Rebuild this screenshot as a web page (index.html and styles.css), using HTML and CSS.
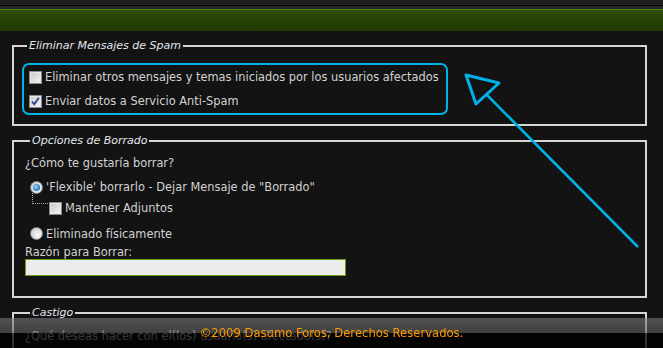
FILE: index.html
```
<!DOCTYPE html>
<html lang="es">
<head>
  <meta charset="UTF-8" />
  <title>Moderación - Eliminar Mensajes</title>
  <link rel="stylesheet" href="styles.css">
</head>
<body>
  <!-- Cabecera -->
  <div class="cabecera">
    <div class="franja-superior"></div>
    <div class="franja-gris"></div>
    <div class="barra-verde"></div>
  </div>

  <div class="contenido">
    <fieldset class="grupo grupo-spam">
      <legend>Eliminar Mensajes de Spam</legend>
      <div class="resaltado">
        <label class="fila">
          <span class="casilla"></span>
          Eliminar otros mensajes y temas iniciados por los usuarios afectados
        </label>
        <label class="fila">
          <span class="casilla marcada">
            <svg width="11" height="11" viewBox="0 0 11 11"><path d="M2 5.5 L4.3 8.3 L8.8 1.8" fill="none" stroke="#2a3f9c" stroke-width="1.8"/></svg>
          </span>
          Enviar datos a Servicio Anti-Spam
        </label>
      </div>
    </fieldset>

    <fieldset class="grupo grupo-borrado">
      <legend>Opciones de Borrado</legend>
      <p class="pregunta">¿Cómo te gustaría borrar?</p>
      <label class="opcion">
        <span class="radio activo"></span>
        'Flexible' borrarlo - Dejar Mensaje de "Borrado"
      </label>
      <label class="opcion sub">
        <span class="guia"></span>
        <span class="casilla"></span>
        Mantener Adjuntos
      </label>
      <label class="opcion segunda">
        <span class="radio"></span>
        Eliminado físicamente
      </label>
      <div class="etiqueta">Razón para Borrar:</div>
      <input class="campo" type="text">
    </fieldset>

    <fieldset class="grupo grupo-castigo">
      <legend>Castigo</legend>
      <p class="pregunta">¿Qué deseas hacer con el(los) usuario(s) afectado(s)?</p>
    </fieldset>
  </div>

  <!-- Anotación (flecha) -->
  <svg class="flecha" width="663" height="348" viewBox="0 0 663 348">
    <polygon points="466,75 499,83 476,104" fill="none" stroke="#00b2e6" stroke-width="3" stroke-linejoin="round"/>
    <line x1="486" y1="94" x2="638" y2="247" stroke="#00b2e6" stroke-width="2.5"/>
  </svg>

  <div class="pie">©2009 Dasumo Foros, Derechos Reservados.</div>
</body>
</html>
```

FILE: styles.css
```
:root {
  --fondo: #131313;
  --texto: #d2d2d2;
  --borde: #d6d6d6;
  --azul: #00b2e6;
  --naranja: #ff9a00;
}

* {
  margin: 0;
  padding: 0;
  box-sizing: border-box;
}

body {
  background-color: var(--fondo);
  color: var(--texto);
  font-family: 'DejaVu Sans', Verdana, sans-serif;
  font-size: 11.4px;
  overflow: hidden;
  height: 348px;
}

/* Cabecera */
.franja-superior {
  height: 6px;
  background: #1f1f1f;
  border-bottom: 1px solid #000;
}

.franja-gris {
  height: 3px;
  background: #262626;
}

.barra-verde {
  height: 22px;
  border-top: 1px solid #4e8a06;
  background: linear-gradient(#2f4f07, #1f3803);
}

.contenido {
  padding: 0 16px 0 12px;
}

/* Grupos */
.grupo {
  border: 2px solid var(--borde);
  margin-top: 8px;
  padding: 11px 8px 9px 8px;
}

.grupo legend {
  font-style: italic;
  font-size: 11px;
  color: #e2e8ee;
  line-height: 13px;
  padding: 0 2px;
  margin-left: 5px;
}

.resaltado {
  border: 2px solid var(--azul);
  border-radius: 7px;
  width: 426px;
  padding-left: 5px;
}

.fila {
  display: flex;
  align-items: center;
  height: 24px;
  gap: 3px;
}

/* Casillas y radios */
.casilla {
  width: 13px;
  height: 13px;
  border: 1px solid #8a8a8a;
  background: linear-gradient(135deg, #c9c9c9, #f4f4f4);
  box-shadow: inset 0 0 0 1px #e8e8e8;
  display: inline-flex;
  align-items: center;
  justify-content: center;
  flex-shrink: 0;
}

.radio {
  width: 13px;
  height: 13px;
  border-radius: 50%;
  border: 1px solid #8c8c8c;
  background: radial-gradient(circle at 65% 65%, #fafafa, #c4c4c4);
  flex-shrink: 0;
  position: relative;
}

.radio.activo::after {
  content: "";
  position: absolute;
  left: 2px;
  top: 2px;
  width: 7px;
  height: 7px;
  border-radius: 50%;
  background: radial-gradient(circle at 40% 40%, #9fd8ff, #1b6fc4 70%);
}

.grupo-borrado {
  padding: 8px 8px 20px 11px;
}

.pregunta {
  line-height: 16px;
}

.opcion {
  display: flex;
  align-items: center;
  gap: 3px;
  height: 20px;
  margin-top: 6px;
  margin-left: 5px;
}

.opcion.sub {
  margin-top: 2px;
  height: 18px;
  margin-left: 24px;
  position: relative;
}

.guia {
  position: absolute;
  left: -17px;
  top: -6px;
  width: 16px;
  height: 11px;
  border-left: 1px dotted #aaa;
  border-bottom: 1px dotted #aaa;
}

.opcion.segunda {
  margin-top: 7px;
  height: 19px;
}

.etiqueta {
  line-height: 13px;
  margin-top: 3px;
}

.campo {
  display: block;
  width: 321px;
  height: 17px;
  border: 1px solid #6e9a12;
  background: #ececec;
}

.grupo-castigo {
  padding: 8px 8px 20px 11px;
}

.grupo-castigo .pregunta {
  margin-top: 1px;
}

/* Anotación */
.flecha {
  position: absolute;
  left: 0;
  top: 0;
  pointer-events: none;
}

/* Pie */
.pie {
  position: fixed;
  left: 0;
  right: 0;
  bottom: 0;
  height: 30px;
  line-height: 31px;
  text-align: center;
  font-size: 11.6px;
  color: var(--naranja);
  background: linear-gradient(rgba(125, 125, 125, 0.6), rgba(95, 95, 95, 0.6) 50%, rgba(0, 0, 0, 0.72) 50%, rgba(0, 0, 0, 0.78));
}
```
